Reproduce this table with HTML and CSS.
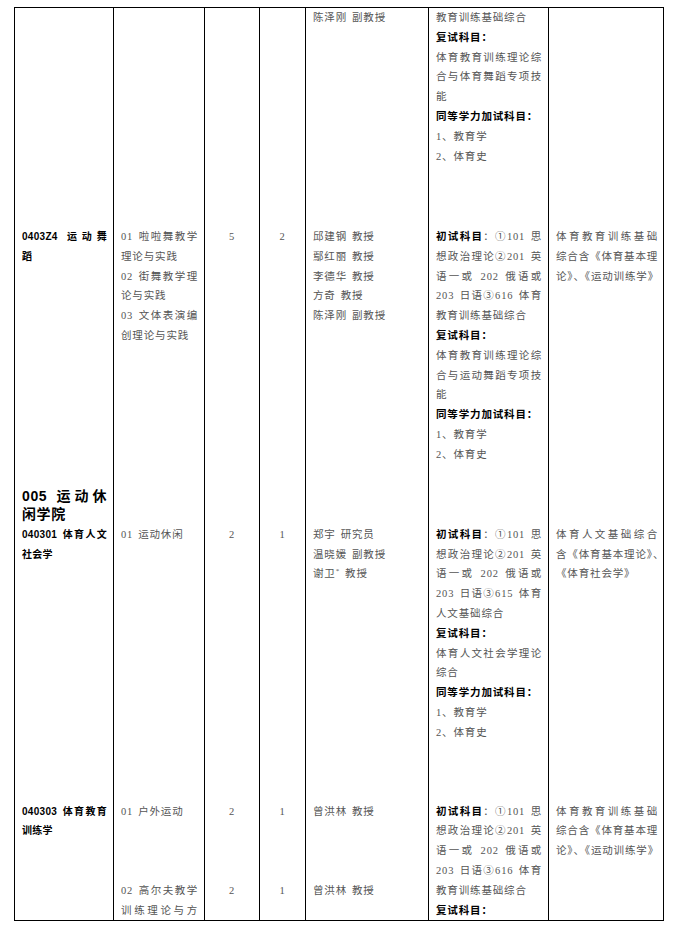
FILE: index.html
```html
<!DOCTYPE html>
<html lang="zh-CN">
<head>
<meta charset="utf-8">
<title>招生专业目录</title>
<link rel="stylesheet" href="styles.css">
</head>
<body>
<table class="plan">
  <colgroup>
    <col class="w1"><col class="w2"><col class="w3"><col class="w4"><col class="w5"><col class="w6"><col class="w7">
  </colgroup>
  <tbody>
    <tr class="row-a">
      <td></td>
      <td></td>
      <td></td>
      <td></td>
      <td><div class="ln">陈泽刚 副教授</div></td>
      <td>
        <div class="ln">教育训练基础综合</div>
        <div class="ln lab">复试科目：</div>
        <div class="ln j">体育教育训练理论综</div>
        <div class="ln j">合与体育舞蹈专项技</div>
        <div class="ln">能</div>
        <div class="ln lab">同等学力加试科目：</div>
        <div class="ln">1、教育学</div>
        <div class="ln">2、体育史</div>
      </td>
      <td class="last"></td>
    </tr>
    <tr class="row-b">
      <td>
        <div class="ln j code">0403Z4 运动舞</div>
        <div class="ln code">蹈</div>
      </td>
      <td>
        <div class="ln j">01 啦啦舞教学</div>
        <div class="ln">理论与实践</div>
        <div class="ln j">02 街舞教学理</div>
        <div class="ln">论与实践</div>
        <div class="ln j">03 文体表演编</div>
        <div class="ln">创理论与实践</div>
      </td>
      <td class="num"><div class="ln">5</div></td>
      <td class="num"><div class="ln">2</div></td>
      <td>
        <div class="ln">邱建钢 教授</div>
        <div class="ln">鄢红丽 教授</div>
        <div class="ln">李德华 教授</div>
        <div class="ln">方奇 教授</div>
        <div class="ln">陈泽刚 副教授</div>
      </td>
      <td>
        <div class="ln j"><b class="lab">初试科目</b>：①101 思</div>
        <div class="ln j">想政治理论②201 英</div>
        <div class="ln j">语一或 202 俄语或</div>
        <div class="ln j">203 日语③616 体育</div>
        <div class="ln">教育训练基础综合</div>
        <div class="ln lab">复试科目：</div>
        <div class="ln j">体育教育训练理论综</div>
        <div class="ln j">合与运动舞蹈专项技</div>
        <div class="ln">能</div>
        <div class="ln lab">同等学力加试科目：</div>
        <div class="ln">1、教育学</div>
        <div class="ln">2、体育史</div>
      </td>
      <td class="last">
        <div class="ln j">体育教育训练基础</div>
        <div class="ln j">综合含《体育基本理</div>
        <div class="ln j">论》、《运动训练学》</div>
      </td>
    </tr>
    <tr class="row-h">
      <td>
        <div class="ln j school">005 运动休</div>
        <div class="ln school">闲学院</div>
      </td>
      <td></td>
      <td></td>
      <td></td>
      <td></td>
      <td></td>
      <td class="last"></td>
    </tr>
    <tr class="row-c">
      <td>
        <div class="ln j code">040301 体育人文</div>
        <div class="ln code">社会学</div>
      </td>
      <td><div class="ln">01 运动休闲</div></td>
      <td class="num"><div class="ln">2</div></td>
      <td class="num"><div class="ln">1</div></td>
      <td>
        <div class="ln">郑宇 研究员</div>
        <div class="ln">温晓媛 副教授</div>
        <div class="ln">谢卫<sup class="mark">*</sup> 教授</div>
      </td>
      <td>
        <div class="ln j"><b class="lab">初试科目</b>：①101 思</div>
        <div class="ln j">想政治理论②201 英</div>
        <div class="ln j">语一或 202 俄语或</div>
        <div class="ln j">203 日语③615 体育</div>
        <div class="ln">人文基础综合</div>
        <div class="ln lab">复试科目：</div>
        <div class="ln j">体育人文社会学理论</div>
        <div class="ln">综合</div>
        <div class="ln lab">同等学力加试科目：</div>
        <div class="ln">1、教育学</div>
        <div class="ln">2、体育史</div>
      </td>
      <td class="last">
        <div class="ln j">体育人文基础综合</div>
        <div class="ln j">含《体育基本理论》、</div>
        <div class="ln">《体育社会学》</div>
      </td>
    </tr>
    <tr class="row-d">
      <td rowspan="2">
        <div class="ln j code">040303 体育教育</div>
        <div class="ln code">训练学</div>
      </td>
      <td class="sub"><div class="ln">01 户外运动</div></td>
      <td class="num sub"><div class="ln">2</div></td>
      <td class="num sub"><div class="ln">1</div></td>
      <td class="sub"><div class="ln">曾洪林 教授</div></td>
      <td rowspan="2">
        <div class="ln j"><b class="lab">初试科目</b>：①101 思</div>
        <div class="ln j">想政治理论②201 英</div>
        <div class="ln j">语一或 202 俄语或</div>
        <div class="ln j">203 日语③616 体育</div>
        <div class="ln">教育训练基础综合</div>
        <div class="ln lab">复试科目：</div>
      </td>
      <td class="last" rowspan="2">
        <div class="ln j">体育教育训练基础</div>
        <div class="ln j">综合含《体育基本理</div>
        <div class="ln j">论》、《运动训练学》</div>
      </td>
    </tr>
    <tr class="row-e">
      <td>
        <div class="ln j">02 高尔夫教学</div>
        <div class="ln j">训练理论与方</div>
      </td>
      <td class="num"><div class="ln">2</div></td>
      <td class="num"><div class="ln">1</div></td>
      <td><div class="ln">曾洪林 教授</div></td>
    </tr>
  </tbody>
</table>
</body>
</html>
```
FILE: styles.css
```css
html, body {
  background: #fff;
}
body {
  margin: 7px 0 0 14px;
  font-family: "Liberation Serif", "Noto Sans CJK SC", serif;
  font-size: 10.5px;
  color: #555;
}
.plan {
  border-collapse: separate;
  border-spacing: 0;
  table-layout: fixed;
  width: 650px;
  border-top: 1px solid #000;
  border-bottom: 1px solid #000;
}
.w1 { width: 99px; }
.w2 { width: 91px; }
.w3 { width: 55px; }
.w4 { width: 46px; }
.w5 { width: 123px; }
.w6 { width: 120px; }
.w7 { width: 116px; }
.plan td {
  border-left: 1px solid #000;
  padding: 0 6px 0 7px;
  vertical-align: top;
  line-height: 19.8px;
}
.plan td.last {
  border-right: 1px solid #000;
  padding-right: 5px;
}
.plan td.num {
  text-align: center;
  padding-left: 0;
  padding-right: 0;
}
.ln {
  white-space: nowrap;
  letter-spacing: 0.85px;
  word-spacing: 1.5px;
}
.j {
  text-align: justify;
  text-align-last: justify;
}
.lab {
  color: #000;
  font-weight: bold;
  font-family: "Liberation Sans", "Noto Sans CJK SC", sans-serif;
}
.code {
  color: #000;
  font-weight: bold;
  font-family: "Liberation Sans", "Noto Sans CJK SC", sans-serif;
  font-size: 10px;
  letter-spacing: 0.3px;
}
.school {
  color: #000;
  font-weight: bold;
  font-family: "Liberation Sans", "Noto Sans CJK SC", sans-serif;
  font-size: 14px;
  line-height: 18px;
  letter-spacing: 0.6px;
}
.mark {
  font-size: 7px;
  line-height: 0;
  vertical-align: 4px;
}
.row-b td { padding-top: 60.7px; }
.row-h td { padding-top: 22.3px; }
.row-c td { padding-top: 1.8px; }
.row-d td { padding-top: 59.2px; }
.row-d td.sub { padding-bottom: 59.4px; }
.row-e td { padding-top: 0; }
```
